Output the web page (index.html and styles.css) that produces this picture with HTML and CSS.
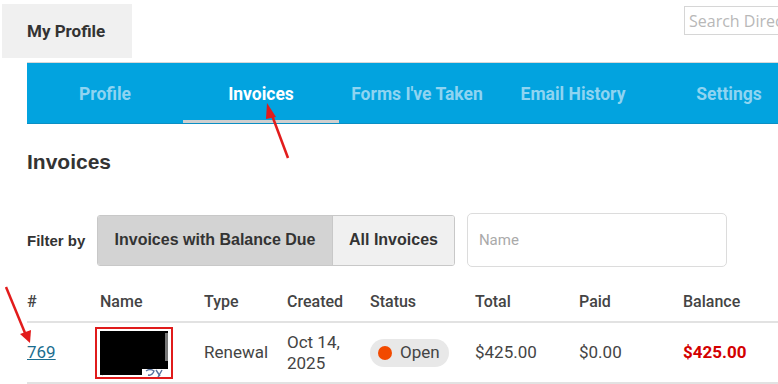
FILE: index.html
```html
<!DOCTYPE html>
<html>
  <head>
    <meta charset="utf8" />
    <title>My Profile - Invoices</title>
    <link rel="stylesheet" href="styles.css">
  </head>
  <body>
    <div class="top">
      <div class="page-tab">My Profile</div>
      <input class="search" type="text" placeholder="Search Directory">
    </div>
    <nav class="tabs">
      <a class="tab">Profile</a>
      <a class="tab active">Invoices</a>
      <a class="tab">Forms I've Taken</a>
      <a class="tab">Email History</a>
      <a class="tab">Settings</a>
    </nav>
    <div class="content">
      <h1 class="title">Invoices</h1>
      <div class="filters">
        <span class="filter-label">Filter by</span>
        <div class="btn-group">
          <button class="btn selected">Invoices with Balance Due</button>
          <button class="btn">All Invoices</button>
        </div>
        <input class="name-input" type="text" placeholder="Name">
      </div>
      <table class="invoices">
        <thead>
          <tr>
            <th class="c-num">#</th>
            <th class="c-name">Name</th>
            <th class="c-type">Type</th>
            <th class="c-created">Created</th>
            <th class="c-status">Status</th>
            <th class="c-total">Total</th>
            <th class="c-paid">Paid</th>
            <th class="c-balance">Balance</th>
          </tr>
        </thead>
        <tbody>
          <tr>
            <td><a class="inv-link">769</a></td>
            <td>
              <div class="redacted">
                <svg width="68" height="46" viewBox="0 0 68 46">
                  <path d="M46,40 q4,-3 8,0 q-2,5 -6,4 M56,39 l4,6 M62,39 l-4,7" stroke="#2d4f86" stroke-width="1.4" fill="none" opacity="0.8"/>
                  <path d="M2,44 l3,-3" stroke="#d88a3a" stroke-width="1.5"/>
                  <path d="M0,0 L68,0 L68,38 L42,38 L42,44 L0,44 Z" fill="#000"/>
                  <path d="M65,2 L68,2 L68,30 L65,30 Z" fill="#777"/>
                </svg>
              </div>
            </td>
            <td>Renewal</td>
            <td>Oct 14,<br>2025</td>
            <td><span class="status"><span class="dot"></span>Open</span></td>
            <td>$425.00</td>
            <td>$0.00</td>
            <td class="due">$425.00</td>
          </tr>
        </tbody>
      </table>
    </div>
    <!-- annotation arrows -->
    <svg class="marks" width="778" height="384" viewBox="0 0 778 384">
      <line x1="288" y1="158" x2="271.5" y2="114" stroke="#e21c1c" stroke-width="2.5"/>
      <polygon points="267,103 276,117 266,119" fill="#e21c1c"/>
      <line x1="6" y1="287" x2="25" y2="333" stroke="#e21c1c" stroke-width="2.5"/>
      <polygon points="30,343 20,334 31,330" fill="#e21c1c"/>
    </svg>
  </body>
</html>
```

FILE: styles.css
```css
body {
  margin: 0;
  font-family: Roboto, "Liberation Sans", sans-serif;
  color: #333;
  background: #fff;
  overflow: hidden;
}

.top {
  display: flex;
  align-items: flex-start;
  height: 62px;
}

.page-tab {
  flex-shrink: 0;
  margin: 4px 0 0 2px;
  width: 130px;
  height: 54px;
  box-sizing: border-box;
  padding: 17px 0 0 25px;
  background: #f0f0f0;
  font-weight: bold;
  font-size: 17px;
  color: #333;
}

.search {
  flex-shrink: 0;
  margin: 6px 0 0 552px;
  width: 110px;
  height: 29px;
  box-sizing: border-box;
  border: 1px solid #d6d6d6;
  padding: 0 4px;
  font-family: "Open Sans", sans-serif;
  font-size: 16px;
  color: #aaa;
}
.search::placeholder {
  color: #b8b8b8;
}

.tabs {
  display: flex;
  margin-left: 27px;
  height: 62px;
  box-sizing: border-box;
  border-top: 1px solid #d8d8d8;
  border-bottom: 1px solid #0a8fc4;
  background: #02a3df;
}

.tab {
  flex: 0 0 156px;
  box-sizing: border-box;
  padding-top: 21px;
  text-align: center;
  font-weight: bold;
  font-size: 17.5px;
  color: #8fd4f1;
  border-bottom: 3px solid transparent;
}
.tab.active {
  color: #fff;
  border-bottom-color: #cfcfcf;
}

.content {
  padding-left: 27px;
}

.title {
  margin: 26px 0 0;
  font-family: "Liberation Sans", Arial, sans-serif;
  font-size: 21px;
  font-weight: bold;
  color: #333;
  line-height: 24px;
}

.filters {
  display: flex;
  align-items: center;
  margin-top: 39px;
}

.filter-label {
  font-family: "Liberation Sans", Arial, sans-serif;
  font-size: 15px;
  font-weight: bold;
  color: #333;
  width: 70px;
}

.btn-group {
  display: flex;
  border: 1px solid #c8c8c8;
  border-radius: 3px;
  overflow: hidden;
}

.btn {
  height: 49px;
  border: 0;
  padding: 0 16px;
  background: #f0f0f0;
  font-family: "Liberation Sans", Arial, sans-serif;
  font-size: 16px;
  font-weight: bold;
  color: #333;
}
.btn.selected {
  background: #d3d3d3;
  border-right: 1px solid #c8c8c8;
  width: 235px;
  padding: 0;
}

.name-input {
  margin-left: 12px;
  width: 260px;
  height: 54px;
  box-sizing: border-box;
  border: 1px solid #dcdcdc;
  border-radius: 5px;
  padding: 0 11px;
  font-family: Roboto, sans-serif;
  font-size: 15px;
}
.name-input::placeholder {
  color: #aaa;
}

.invoices {
  margin-top: 25px;
  border-collapse: collapse;
  table-layout: fixed;
  width: 760px;
  font-size: 17px;
  color: #444;
}

.invoices th {
  text-align: left;
  font-size: 16px;
  font-weight: 500;
  height: 29px;
  padding: 0;
  vertical-align: top;
  border-bottom: 2px solid #e2e2e2;
}

.invoices td {
  padding: 0;
  height: 59px;
  border-bottom: 2px solid #e2e2e2;
  vertical-align: middle;
  line-height: 21px;
}

.c-num { width: 73px; }
.c-name { width: 104px; }
.c-type { width: 83px; }
.c-created { width: 83px; }
.c-status { width: 105px; }
.c-total { width: 104px; }
.c-paid { width: 104px; }
.c-balance { width: 104px; }

.inv-link {
  color: #1b6d8f;
  text-decoration: underline;
}

.redacted {
  margin-left: -5px;
  width: 78px;
  height: 52px;
  box-sizing: border-box;
  border: 2px solid #e01b1b;
  padding: 2px 0 0 3px;
}
.redacted svg {
  display: block;
}

.status {
  display: inline-flex;
  align-items: center;
  gap: 8px;
  height: 28px;
  padding: 0 9px 0 8px;
  border-radius: 14px;
  background: #e8e8e8;
}

.dot {
  width: 14px;
  height: 14px;
  border-radius: 50%;
  background: #f24a00;
}

.due {
  color: #d30000;
  font-weight: bold;
}

.marks {
  position: absolute;
  left: 0;
  top: 0;
  pointer-events: none;
}
```
